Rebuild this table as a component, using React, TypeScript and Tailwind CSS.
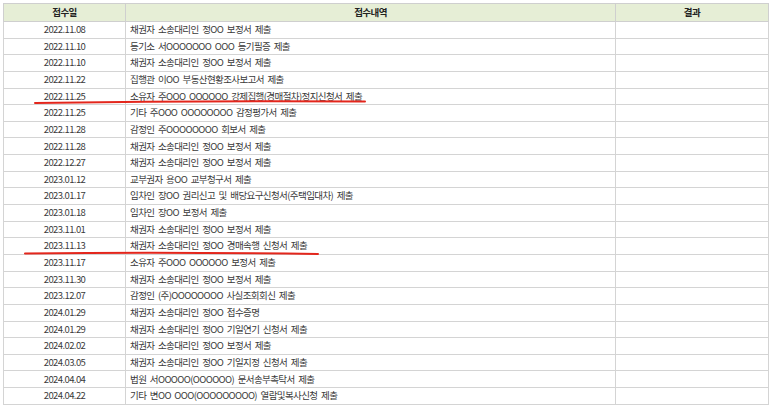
import React from 'react'

const rows: [string, string][] = [
  ['2022.11.08', '채권자 소송대리인 정OO 보정서 제출'],
  ['2022.11.10', '등기소 서OOOOOOO OOO 등기필증 제출'],
  ['2022.11.10', '채권자 소송대리인 정OO 보정서 제출'],
  ['2022.11.22', '집행관 이OO 부동산현황조사보고서 제출'],
  ['2022.11.25', '소유자 주OOO OOOOOO 강제집행(경매절차)정지신청서 제출'],
  ['2022.11.25', '기타 주OOO OOOOOOOO 감정평가서 제출'],
  ['2022.11.28', '감정인 주OOOOOOOO 회보서 제출'],
  ['2022.11.28', '채권자 소송대리인 정OO 보정서 제출'],
  ['2022.12.27', '채권자 소송대리인 정OO 보정서 제출'],
  ['2023.01.12', '교부권자 용OO 교부청구서 제출'],
  ['2023.01.17', '임차인 장OO 권리신고 및 배당요구신청서(주택임대차) 제출'],
  ['2023.01.18', '임차인 장OO 보정서 제출'],
  ['2023.11.01', '채권자 소송대리인 정OO 보정서 제출'],
  ['2023.11.13', '채권자 소송대리인 정OO 경매속행 신청서 제출'],
  ['2023.11.17', '소유자 주OOO OOOOOO 보정서 제출'],
  ['2023.11.30', '채권자 소송대리인 정OO 보정서 제출'],
  ['2023.12.07', '감정인 (주)OOOOOOOO 사실조회회신 제출'],
  ['2024.01.29', '채권자 소송대리인 정OO 접수증명'],
  ['2024.01.29', '채권자 소송대리인 정OO 기일연기 신청서 제출'],
  ['2024.02.02', '채권자 소송대리인 정OO 보정서 제출'],
  ['2024.03.05', '채권자 소송대리인 정OO 기일지정 신청서 제출'],
  ['2024.04.04', '법원 서OOOOO(OOOOOO) 문서송부촉탁서 제출'],
  ['2024.04.22', '기타 변OO OOO(OOOOOOOOO) 열람및복사신청 제출'],
]

export default function App() {
  return (
    <div className="relative w-[773px] h-[409px] bg-white pl-[3px] pt-[3px] font-['Noto_Sans_CJK_KR','Noto_Sans',sans-serif] text-[9.5px] tracking-[-0.6px] [word-spacing:2px] text-[#3a3a3a]">
      <table className="w-[766px] border-collapse table-fixed">
        <colgroup>
          <col className="w-[122px]" />
          <col className="w-[490px]" />
          <col />
        </colgroup>
        <thead>
          <tr className="h-[18px] bg-[#e6eed6]">
            <th className="border border-[#cfcfcf] font-bold text-[#222] text-center p-0">접수일</th>
            <th className="border border-[#cfcfcf] font-bold text-[#222] text-center p-0">접수내역</th>
            <th className="border border-[#cfcfcf] font-bold text-[#222] text-center p-0">결과</th>
          </tr>
        </thead>
        <tbody>
          {rows.map(([date, text], i) => (
            <tr key={i} className="h-[16.65px]">
              <td className="border border-[#d4d4d4] text-center p-0 leading-none">{date}</td>
              <td className="border border-[#d4d4d4] pl-[4px] p-0 leading-none whitespace-nowrap">{text}</td>
              <td className="border border-[#d4d4d4] p-0"></td>
            </tr>
          ))}
        </tbody>
      </table>

      {/* 빨간 밑줄 */}
      <svg className="absolute left-0 top-0 pointer-events-none" width="773" height="409">
        <path d="M35 103 Q200 100.5 365 101.5" stroke="#e3261c" strokeWidth="2" fill="none" strokeLinecap="round" />
        <path d="M25 253.5 Q170 252 318 254" stroke="#e3261c" strokeWidth="2" fill="none" strokeLinecap="round" />
      </svg>
    </div>
  )
}
